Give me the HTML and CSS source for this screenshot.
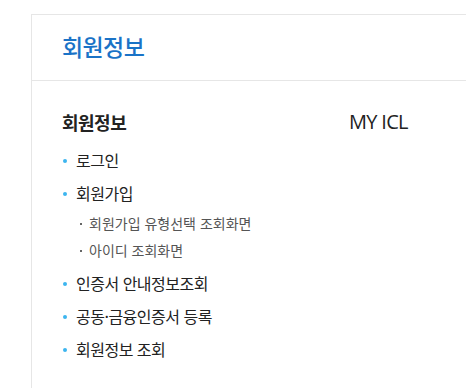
FILE: index.html
```html
<!DOCTYPE html>
<html lang="ko">
<head>
<meta charset="utf-8">
<link rel="stylesheet" href="styles.css">
</head>
<body>
<div class="panel">
  <div class="panel-head"><h1 class="title">회원정보</h1></div>
  <div class="panel-body">
    <div class="col col-left">
      <h2 class="col-title">회원정보</h2>
      <ul class="menu">
        <li class="menu-item">로그인</li>
        <li class="menu-item">회원가입
          <ul class="sub">
            <li class="sub-item">회원가입 유형선택 조회화면</li>
            <li class="sub-item">아이디 조회화면</li>
          </ul>
        </li>
        <li class="menu-item">인증서 안내정보조회</li>
        <li class="menu-item">공동·금융인증서 등록</li>
        <li class="menu-item">회원정보 조회</li>
      </ul>
    </div>
    <div class="col col-right">
      <h2 class="col-title en">MY ICL</h2>
    </div>
  </div>
</div>
</body>
</html>
```
FILE: styles.css
```css
html, body { margin: 0; padding: 0; background: #fff; }
body {
  font-family: "Noto Sans CJK KR", "Noto Sans", sans-serif;
  color: #222;
  overflow: hidden;
  height: 388px;
}
.panel {
  margin: 14px 0 0 31px;
  border: 1px solid #e6e6e6;
  border-right: none;
  border-bottom: none;
  height: 374px;
}
.panel-head {
  height: 63px;
  padding-bottom: 2px;
  border-bottom: 1px solid #e6e6e6;
  padding-left: 30px;
  display: flex;
  align-items: center;
}
.title {
  margin: 0;
  font-size: 23px;
  font-weight: 500;
  color: #1a73c7;
  line-height: 1;
  letter-spacing: -0.6px;
}
.panel-body {
  display: flex;
  padding: 27px 0 0 30px;
}
.col-left { width: 287px; }
.col-title {
  margin: 0;
  font-size: 18px;
  font-weight: 700;
  line-height: 28px;
  color: #222;
  letter-spacing: -0.5px;
}
.col-title.en {
  font-family: "Open Sans", "Noto Sans", sans-serif;
  font-weight: 500;
  font-size: 20px;
  color: #222;
  letter-spacing: -0.7px;
}
.menu {
  list-style: none;
  margin: 8px 0 0 0;
  padding: 0;
}
.menu-item {
  position: relative;
  padding-left: 14px;
  font-size: 16px;
  line-height: 33px;
  color: #222;
  letter-spacing: -0.5px;
}
.menu-item::before {
  content: "";
  position: absolute;
  left: 1px;
  top: 15px;
  width: 4px;
  height: 4px;
  border-radius: 50%;
  background: #3db5ef;
}
.sub {
  list-style: none;
  margin: 0 0 3px 0;
  padding: 0;
}
.sub-item {
  position: relative;
  padding-left: 13px;
  font-size: 14px;
  line-height: 27px;
  color: #555;
  letter-spacing: 0;
}
.sub-item::before {
  content: "";
  position: absolute;
  left: 4px;
  top: 13px;
  width: 2px;
  height: 2px;
  background: #666;
}
```
